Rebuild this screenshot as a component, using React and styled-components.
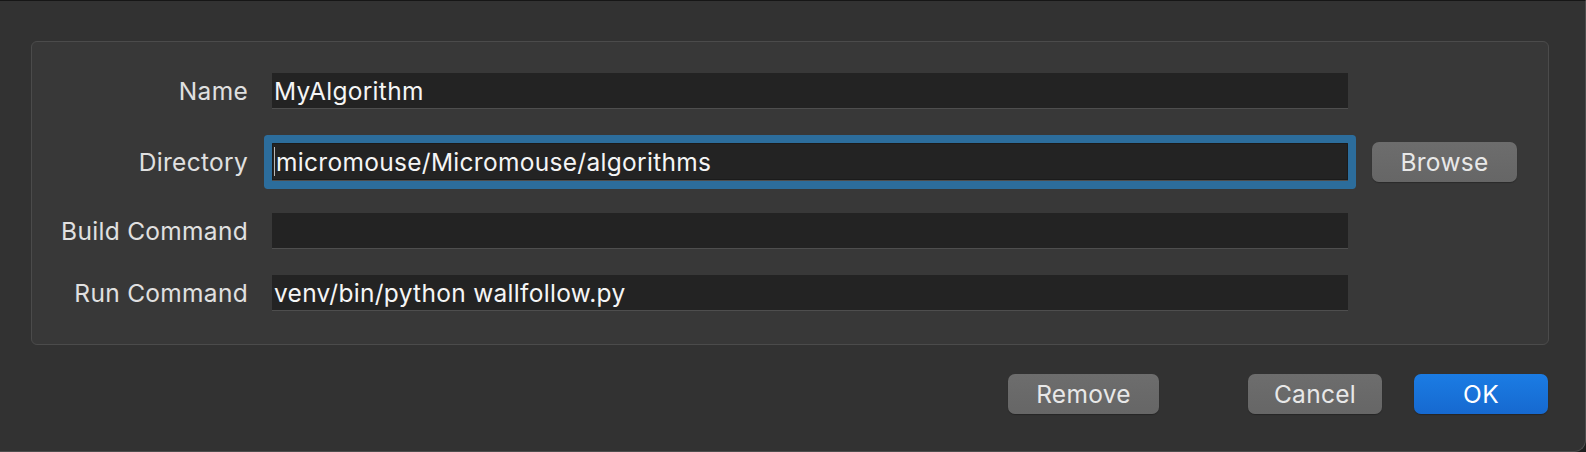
import React from "react";
import styled, { createGlobalStyle } from "styled-components";

const GlobalStyle = createGlobalStyle`
  html, body {
    margin: 0;
    padding: 0;
    background: #1f1f1f;
  }
  body {
    font-family: Inter, "Liberation Sans", Arial, sans-serif;
    -webkit-font-smoothing: antialiased;
  }
`;

const Window = styled.div`
  box-sizing: border-box;
  width: 1586px;
  height: 452px;
  background: #323232;
  border-top: 1px solid #161616;
  border-right: 1px solid #4e4e4e;
  border-bottom: 1px solid #4e4e4e;
  border-bottom-right-radius: 12px;
  padding: 40px 0 0 31px;
  display: flex;
  flex-direction: column;
`;

const Panel = styled.div`
  box-sizing: border-box;
  width: 1518px;
  background: #383838;
  border: 1px solid #4b4b4b;
  border-radius: 6px;
  padding: 29px 30px 31px 20px;
  display: flex;
  flex-direction: column;
`;

const Row = styled.div`
  display: grid;
  grid-template-columns: 196px 1076px 145px;
  column-gap: 24px;
  align-items: center;
  height: 40px;
  margin-top: ${(p) => p.$gap || 0}px;
`;

const Label = styled.label`
  text-align: right;
  font-size: 24.5px;
  color: #e0e0e0;
  white-space: nowrap;
  letter-spacing: 0.3px;
`;

const Field = styled.div`
  position: relative;
  box-sizing: border-box;
  height: ${(p) => (p.$focused ? 38 : 36)}px;
  background: #232323;
  border-bottom: 1px solid #4e4e4e;
  border-radius: ${(p) => (p.$focused ? "1px" : "0")};
  box-shadow: ${(p) =>
    p.$focused ? "inset 0 0 0 1px #1b1b1b, 0 0 0 8px #2c6d9c" : "none"};
  display: flex;
  align-items: center;
  padding-left: ${(p) => (p.$focused ? 4 : 2)}px;
  font-size: 24.5px;
  color: #f5f5f5;
  white-space: nowrap;
  letter-spacing: 0.3px;
`;

const Caret = styled.span`
  position: absolute;
  left: 2px;
  top: 4px;
  bottom: 4px;
  width: 1px;
  background: #b8b8b8;
`;

const Button = styled.button`
  box-sizing: border-box;
  height: 40px;
  width: ${(p) => p.$w}px;
  border: none;
  border-radius: 7px;
  font-family: inherit;
  font-size: 24.5px;
  letter-spacing: 0.3px;
  color: ${(p) => (p.$primary ? "#ffffff" : "#e8e8e8")};
  background: ${(p) =>
    p.$primary
      ? "linear-gradient(#1b7ce4, #1669d0)"
      : "linear-gradient(#6d6d6d, #666666)"};
  box-shadow: 0 1px 1px rgba(0, 0, 0, 0.25);
  padding: 0;
  cursor: default;
`;

const Footer = styled.div`
  width: 1518px;
  margin-top: 29px;
  display: flex;
  justify-content: flex-end;
  align-items: center;
`;

const Spacer = styled.div`
  width: ${(p) => p.$w}px;
`;

const App = () => {
  return (
    <>
      <GlobalStyle />
      <Window>
        <Panel>
          <Row>
            <Label>Name</Label>
            <Field>MyAlgorithm</Field>
          </Row>
          <Row $gap={31}>
            <Label>Directory</Label>
            <Field $focused>
              <Caret />
              micromouse/Micromouse/algorithms
            </Field>
            <Button $w={145}>Browse</Button>
          </Row>
          <Row $gap={29}>
            <Label>Build Command</Label>
            <Field />
          </Row>
          <Row $gap={22}>
            <Label>Run Command</Label>
            <Field>venv/bin/python wallfollow.py</Field>
          </Row>
        </Panel>
        <Footer>
          <Button $w={151}>Remove</Button>
          <Spacer $w={89} />
          <Button $w={134}>Cancel</Button>
          <Spacer $w={32} />
          <Button $w={134} $primary>
            OK
          </Button>
          <Spacer $w={1} />
        </Footer>
      </Window>
    </>
  );
};

export default App;
